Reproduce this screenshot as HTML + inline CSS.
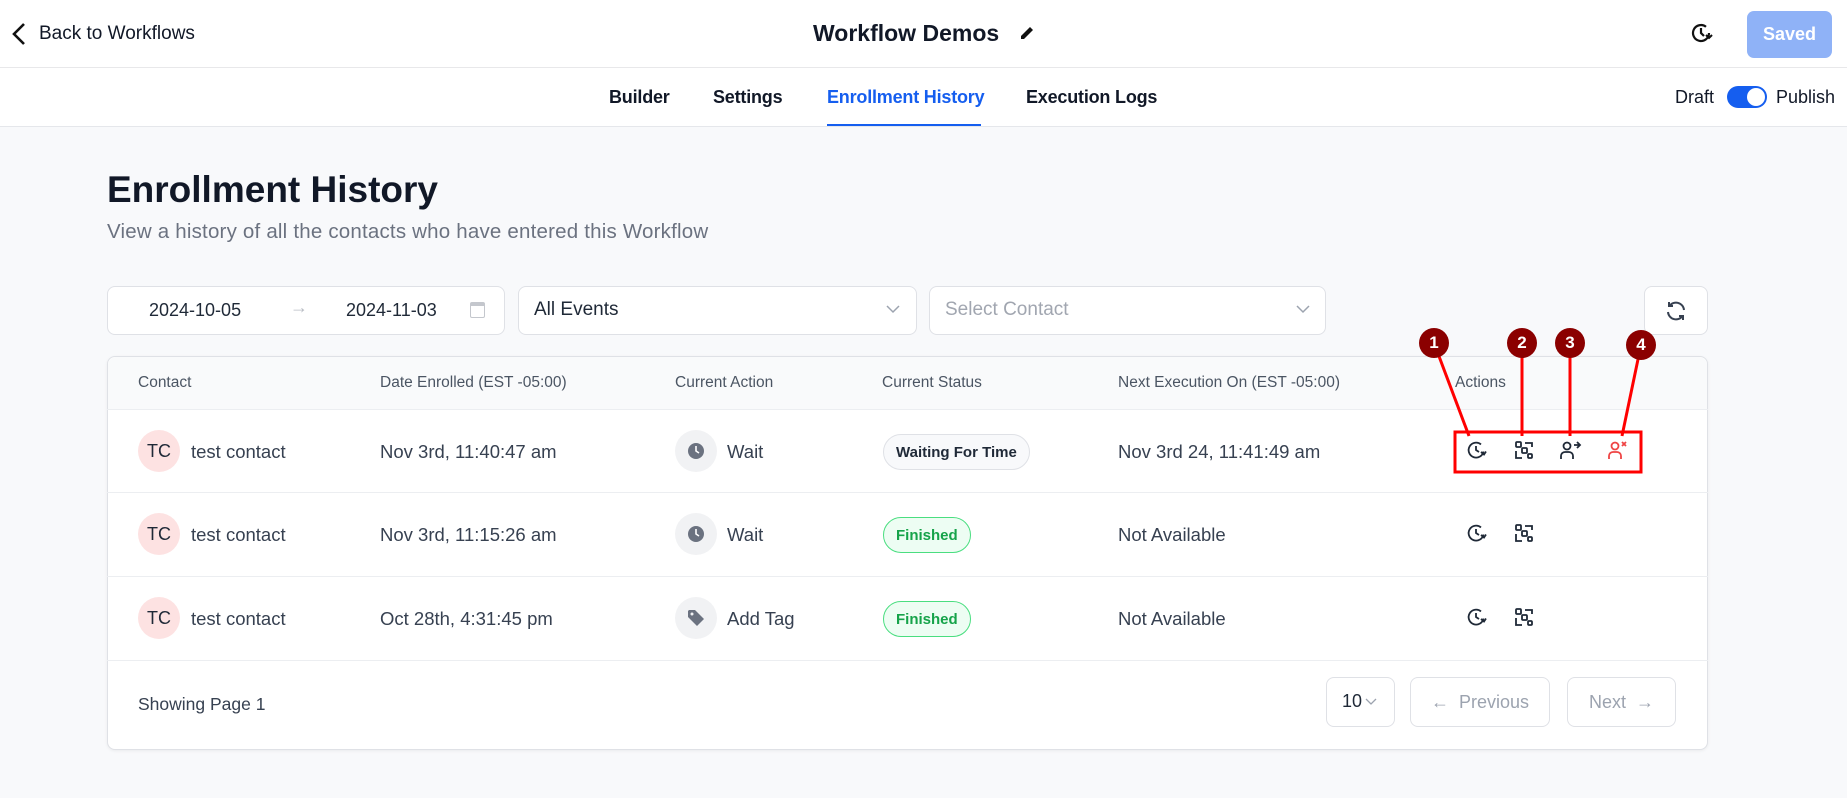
<!DOCTYPE html>
<html><head><meta charset="utf-8"><style>
*{box-sizing:border-box;margin:0;padding:0}
body{width:1847px;height:798px;background:#f8f9fb;font-family:"Liberation Sans",sans-serif;position:relative;overflow:hidden;color:#111827}
.a{position:absolute}
.hdr{left:0;top:0;width:1847px;height:127px;background:#fff;border-bottom:1px solid #e5e7eb}
.hl{left:0;top:67px;width:1847px;height:1px;background:#e8e8ea}
.tab{top:87px;font-size:18px;font-weight:bold;color:#111827;letter-spacing:-0.2px}
.box{background:#fff;border:1px solid #dfe1e6;border-radius:8px}
.th{font-size:15.5px;color:#4b5563;top:374px}
.cell{font-size:18.5px;color:#374151}
.av{width:42px;height:42px;border-radius:50%;background:#fde2e2;color:#1f2937;font-size:18px;display:flex;align-items:center;justify-content:center}
.ic{width:42px;height:42px;border-radius:50%;background:#f1f2f4;display:flex;align-items:center;justify-content:center}
.pill{height:36px;border-radius:18px;font-size:15px;font-weight:bold;display:flex;align-items:center;padding:0 12px}
.fin{background:#edfdf3;border:1px solid #4ade80;color:#16a34a}
.rl{left:107px;width:1601px;height:1px;background:#eceef1}
.mk{width:30px;height:30px;border-radius:50%;background:#8b0000;color:#fff;font-size:17px;font-weight:bold;display:flex;align-items:center;justify-content:center}
</style></head><body>
<div class="a hdr"></div>
<div class="a hl"></div>
<svg class="a" style="left:10px;top:22px" width="18" height="24" viewBox="0 0 18 24"><path d="M14 2 L4 12 L14 22" fill="none" stroke="#111" stroke-width="2.6"/></svg>
<div class="a" style="left:39px;top:23px;font-size:19px">Back to Workflows</div>
<div class="a" style="left:813px;top:20px;font-size:23px;font-weight:bold">Workflow Demos</div>
<svg class="a" style="left:1018px;top:24px" width="18" height="18" viewBox="0 0 18 18"><path d="M3 15 L3 12 L12 3 L15 6 L6 15 Z" fill="#111"/></svg>
<svg class="a" style="left:1689px;top:21px" width="24" height="24" viewBox="0 0 24 24"><path d="M20 12a8 8 0 1 1-3-6.2" fill="none" stroke="#111" stroke-width="2.2"/><path d="M12 7v5l3 3" fill="none" stroke="#111" stroke-width="2.2"/><path d="M17 14l3 3 3-3" fill="none" stroke="#111" stroke-width="2"/></svg>
<div class="a" style="left:1747px;top:11px;width:85px;height:47px;background:#8fb2f7;border-radius:7px;color:#fff;font-size:18px;font-weight:bold;display:flex;align-items:center;justify-content:center">Saved</div>
<div class="a tab" style="left:609px">Builder</div>
<div class="a tab" style="left:713px">Settings</div>
<div class="a tab" style="left:827px;color:#155eef">Enrollment History</div>
<div class="a" style="left:827px;top:124px;width:154px;height:2px;background:#155eef"></div>
<div class="a tab" style="left:1026px">Execution Logs</div>
<div class="a" style="left:1675px;top:87px;font-size:18px">Draft</div>
<div class="a" style="left:1727px;top:86px;width:40px;height:22px;border-radius:11px;background:#155eef"><div class="a" style="left:20px;top:2px;width:18px;height:18px;border-radius:50%;background:#fff"></div></div>
<div class="a" style="left:1776px;top:87px;font-size:18px">Publish</div>

<div class="a" style="left:107px;top:169px;font-size:37px;font-weight:bold;color:#111827">Enrollment History</div>
<div class="a" style="left:107px;top:220px;font-size:20.5px;color:#6b7280;letter-spacing:0.2px">View a history of all the contacts who have entered this Workflow</div>

<div class="a box" style="left:107px;top:286px;width:398px;height:49px"></div>
<div class="a" style="left:149px;top:300px;font-size:18px;color:#1f2937">2024-10-05</div>
<div class="a" style="left:290px;top:297px;font-size:18px;color:#b8bcc4">→</div>
<div class="a" style="left:346px;top:300px;font-size:18px;color:#1f2937">2024-11-03</div>
<div class="a" style="left:470px;top:302px;width:15px;height:16px;border:1.5px solid #c4c7cd;border-radius:2px;border-top-width:4px"></div>
<div class="a box" style="left:518px;top:286px;width:399px;height:49px"></div>
<div class="a" style="left:534px;top:299px;font-size:19px;color:#1f2937">All Events</div>
<svg class="a" style="left:886px;top:304px" width="14" height="10"><path d="M1 2l6 6 6-6" fill="none" stroke="#9ca3af" stroke-width="1.5"/></svg>
<div class="a box" style="left:929px;top:286px;width:397px;height:49px"></div>
<div class="a" style="left:945px;top:299px;font-size:19px;color:#a1a6b0">Select Contact</div>
<svg class="a" style="left:1296px;top:304px" width="14" height="10"><path d="M1 2l6 6 6-6" fill="none" stroke="#9ca3af" stroke-width="1.5"/></svg>
<div class="a box" style="left:1644px;top:286px;width:64px;height:49px"></div>
<svg class="a" style="left:1664px;top:299px" width="24" height="24" viewBox="0 0 24 24"><path d="M20 11a8 8 0 0 0-14.5-4M4 13a8 8 0 0 0 14.5 4" fill="none" stroke="#374151" stroke-width="2"/><path d="M5 3v4h4M19 21v-4h-4" fill="none" stroke="#374151" stroke-width="2"/></svg>

<div class="a box" style="left:107px;top:356px;width:1601px;height:394px;box-shadow:0 1px 3px rgba(0,0,0,.06)"></div>
<div class="a" style="left:108px;top:357px;width:1599px;height:52px;background:#f9fafb;border-radius:8px 8px 0 0"></div>
<div class="a rl" style="top:409px"></div>
<div class="a rl" style="top:492px"></div>
<div class="a rl" style="top:576px"></div>
<div class="a rl" style="top:660px"></div>
<div class="a th" style="left:138px">Contact</div>
<div class="a th" style="left:380px">Date Enrolled (EST -05:00)</div>
<div class="a th" style="left:675px">Current Action</div>
<div class="a th" style="left:882px">Current Status</div>
<div class="a th" style="left:1118px">Next Execution On (EST -05:00)</div>
<div class="a th" style="left:1455px">Actions</div>

<div class="a av" style="left:138px;top:430px">TC</div><div class="a cell" style="left:191px;top:441px">test contact</div>
<div class="a cell" style="left:380px;top:441px">Nov 3rd, 11:40:47 am</div>
<div class="a ic" style="left:675px;top:430px"><svg width="18" height="18" viewBox="0 0 18 18"><circle cx="9" cy="9" r="8" fill="#6b7280"/><path d="M9 4v5l3 2" stroke="#fff" stroke-width="1.6" fill="none"/></svg></div>
<div class="a cell" style="left:727px;top:441px">Wait</div>
<div class="a pill" style="left:883px;top:434px;background:#f8f9fb;border:1px solid #dfe1e6;color:#1f2937">Waiting For Time</div>
<div class="a cell" style="left:1118px;top:441px">Nov 3rd 24, 11:41:49 am</div>

<div class="a av" style="left:138px;top:513px">TC</div><div class="a cell" style="left:191px;top:524px">test contact</div>
<div class="a cell" style="left:380px;top:524px">Nov 3rd, 11:15:26 am</div>
<div class="a ic" style="left:675px;top:513px"><svg width="18" height="18" viewBox="0 0 18 18"><circle cx="9" cy="9" r="8" fill="#6b7280"/><path d="M9 4v5l3 2" stroke="#fff" stroke-width="1.6" fill="none"/></svg></div>
<div class="a cell" style="left:727px;top:524px">Wait</div>
<div class="a pill fin" style="left:883px;top:517px">Finished</div>
<div class="a cell" style="left:1118px;top:524px">Not Available</div>

<div class="a av" style="left:138px;top:597px">TC</div><div class="a cell" style="left:191px;top:608px">test contact</div>
<div class="a cell" style="left:380px;top:608px">Oct 28th, 4:31:45 pm</div>
<div class="a ic" style="left:675px;top:597px"><svg width="18" height="18" viewBox="0 0 18 18"><path d="M1 2v6l9 9 7-7-9-9H2z" fill="#6b7280"/><circle cx="5" cy="5" r="1.5" fill="#f1f2f4"/></svg></div>
<div class="a cell" style="left:727px;top:608px">Add Tag</div>
<div class="a pill fin" style="left:883px;top:601px">Finished</div>
<div class="a cell" style="left:1118px;top:608px">Not Available</div>

<svg class="a" style="left:0;top:0" width="1847" height="798" viewBox="0 0 1847 798">
<g fill="none" stroke="#1f2937" stroke-width="1.8">
<g transform="translate(1476,450)"><path d="M7.5 1.5A7.5 7.5 0 1 1 5 -5.6"/><path d="M0 -4v4l3 2"/><path d="M5 2l3 2.5 2-3"/></g>
<g transform="translate(1476,533)"><path d="M7.5 1.5A7.5 7.5 0 1 1 5 -5.6"/><path d="M0 -4v4l3 2"/><path d="M5 2l3 2.5 2-3"/></g>
<g transform="translate(1476,617)"><path d="M7.5 1.5A7.5 7.5 0 1 1 5 -5.6"/><path d="M0 -4v4l3 2"/><path d="M5 2l3 2.5 2-3"/></g>
<g transform="translate(1524,450)"><rect x="-8" y="-8" width="5" height="5" rx="1"/><rect x="-2" y="-2" width="5" height="5" rx="1"/><rect x="4" y="4" width="4" height="4" rx="1"/><path d="M1 -7h7v4M-8 1v7h6"/></g>
<g transform="translate(1524,533)"><rect x="-8" y="-8" width="5" height="5" rx="1"/><rect x="-2" y="-2" width="5" height="5" rx="1"/><rect x="4" y="4" width="4" height="4" rx="1"/><path d="M1 -7h7v4M-8 1v7h6"/></g>
<g transform="translate(1524,617)"><rect x="-8" y="-8" width="5" height="5" rx="1"/><rect x="-2" y="-2" width="5" height="5" rx="1"/><rect x="4" y="4" width="4" height="4" rx="1"/><path d="M1 -7h7v4M-8 1v7h6"/></g>
<g transform="translate(1570,450)"><circle cx="-3" cy="-4" r="3.5"/><path d="M-9 9v-3a4 4 0 0 1 4-4h4a4 4 0 0 1 4 4v3"/><path d="M4 -5h5M7 -8l3 3-3 3"/></g>
</g>
<g fill="none" stroke="#ef4444" stroke-width="1.8" transform="translate(1618,450)"><circle cx="-3" cy="-4" r="3.5"/><path d="M-9 9v-3a4 4 0 0 1 4-4h4a4 4 0 0 1 4 4v3"/><path d="M4 -8l4 4M8 -8l-4 4"/></g>
<rect x="1455" y="432" width="186" height="40" fill="none" stroke="#ff0000" stroke-width="3"/>
<g stroke="#ff0000" stroke-width="3">
<line x1="1434" y1="343" x2="1469" y2="436"/>
<line x1="1522" y1="343" x2="1522" y2="436"/>
<line x1="1570" y1="343" x2="1570" y2="436"/>
<line x1="1641" y1="345" x2="1622" y2="436"/>
</g>
</svg>
<div class="a mk" style="left:1419px;top:328px">1</div>
<div class="a mk" style="left:1507px;top:328px">2</div>
<div class="a mk" style="left:1555px;top:328px">3</div>
<div class="a mk" style="left:1626px;top:330px">4</div>

<div class="a" style="left:138px;top:694px;font-size:17.5px;color:#374151">Showing Page 1</div>
<div class="a box" style="left:1326px;top:677px;width:69px;height:50px"></div>
<div class="a" style="left:1342px;top:691px;font-size:18px;color:#1f2937">10</div>
<svg class="a" style="left:1365px;top:698px" width="12" height="8"><path d="M1 1l5 5 5-5" fill="none" stroke="#9ca3af" stroke-width="1.3"/></svg>
<div class="a box" style="left:1410px;top:677px;width:140px;height:50px;color:#9ca3af;font-size:18px;display:flex;align-items:center;justify-content:center">←&nbsp; Previous</div>
<div class="a box" style="left:1567px;top:677px;width:109px;height:50px;color:#9ca3af;font-size:18px;display:flex;align-items:center;justify-content:center">Next &nbsp;→</div>
</body></html>
